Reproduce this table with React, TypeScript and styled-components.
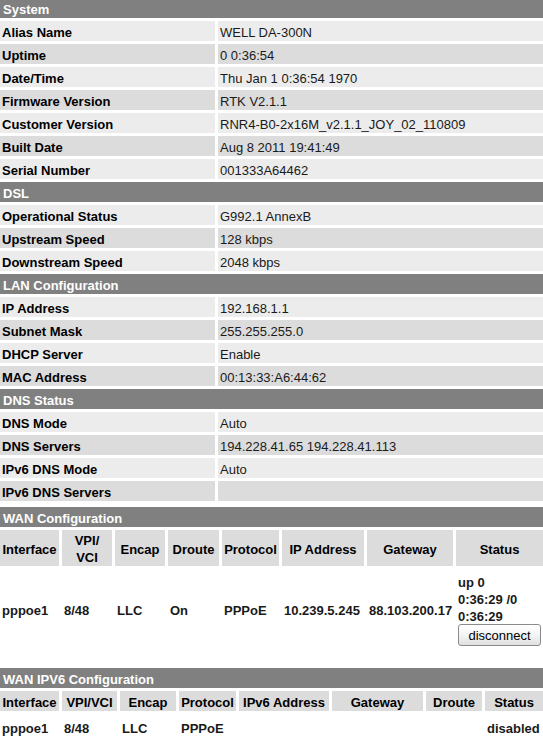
import React, { FunctionComponent } from 'react';
import styled, { createGlobalStyle } from 'styled-components';

const GlobalStyle = createGlobalStyle`
  html, body {
    margin: 0;
    padding: 0;
    background: #ffffff;
    overflow: hidden;
  }
  body {
    font-family: 'Liberation Sans', Arial, sans-serif;
    font-size: 13px;
    color: #000000;
  }
`;

const Page = styled.div`
  width: 543px;
  margin-top: -2px;
  display: flex;
  flex-direction: column;
`;

const InfoGrid = styled.div`
  display: grid;
  grid-template-columns: 215px 1fr;
  gap: 3px;
`;

const SectionHeader = styled.div`
  grid-column: 1 / -1;
  height: 20px;
  line-height: 23px;
  padding-left: 3px;
  background: #808080;
  color: #ffffff;
  font-weight: bold;
  white-space: nowrap;
`;

const Cell = styled.div<{ $shade: boolean }>`
  height: 20px;
  line-height: 24px;
  padding-left: 2px;
  background: ${(p) => (p.$shade ? '#dcdcdc' : '#ececec')};
  white-space: nowrap;
`;

const Label = styled(Cell)`
  font-weight: bold;
  color: #000000;
`;

const Value = styled(Cell)`
  color: #1a1a1a;
`;

const WanGrid = styled.div<{ $cols: string; $top: number }>`
  display: grid;
  grid-template-columns: ${(p) => p.$cols};
  gap: 3px;
  margin-top: ${(p) => p.$top}px;
  font-weight: bold;
`;

const ColHead = styled.div`
  background: #dcdcdc;
  display: flex;
  align-items: center;
  justify-content: center;
  text-align: center;
  line-height: 17px;
  padding: 2px 0 0;
  min-height: 18px;
  white-space: nowrap;
`;

const DataCell = styled.div<{ $top: number; $bottom: number }>`
  display: flex;
  flex-direction: column;
  justify-content: center;
  padding: ${(p) => p.$top}px 0 ${(p) => p.$bottom}px 2px;
  line-height: 17px;
  white-space: nowrap;
  color: #1a1a1a;
`;

const DisconnectButton = styled.button`
  align-self: flex-start;
  width: 83px;
  height: 22px;
  margin-top: -1px;
  padding: 0;
  font-family: 'Liberation Sans', Arial, sans-serif;
  font-size: 13px;
  color: #000000;
  border: 1px solid #8a8a8a;
  border-radius: 3px;
  background: linear-gradient(#ffffff 0%, #f4f4f4 50%, #e0e0e0 100%);
`;

interface Row {
  label: string;
  value: string;
}

interface Section {
  title: string;
  rows: Row[];
}

const sections: Section[] = [
  {
    title: 'System',
    rows: [
      { label: 'Alias Name', value: 'WELL DA-300N' },
      { label: 'Uptime', value: '0 0:36:54' },
      { label: 'Date/Time', value: 'Thu Jan 1 0:36:54 1970' },
      { label: 'Firmware Version', value: 'RTK V2.1.1' },
      { label: 'Customer Version', value: 'RNR4-B0-2x16M_v2.1.1_JOY_02_110809' },
      { label: 'Built Date', value: 'Aug 8 2011 19:41:49' },
      { label: 'Serial Number', value: '001333A64462' },
    ],
  },
  {
    title: 'DSL',
    rows: [
      { label: 'Operational Status', value: 'G992.1 AnnexB' },
      { label: 'Upstream Speed', value: '128 kbps' },
      { label: 'Downstream Speed', value: '2048 kbps' },
    ],
  },
  {
    title: 'LAN Configuration',
    rows: [
      { label: 'IP Address', value: '192.168.1.1' },
      { label: 'Subnet Mask', value: '255.255.255.0' },
      { label: 'DHCP Server', value: 'Enable' },
      { label: 'MAC Address', value: '00:13:33:A6:44:62' },
    ],
  },
  {
    title: 'DNS Status',
    rows: [
      { label: 'DNS Mode', value: 'Auto' },
      { label: 'DNS Servers', value: '194.228.41.65 194.228.41.113' },
      { label: 'IPv6 DNS Mode', value: 'Auto' },
      { label: 'IPv6 DNS Servers', value: '' },
    ],
  },
];

const wanHeads: string[][] = [
  ['Interface'],
  ['VPI/', 'VCI'],
  ['Encap'],
  ['Droute'],
  ['Protocol'],
  ['IP Address'],
  ['Gateway'],
  ['Status'],
];
const wanData = ['pppoe1', '8/48', 'LLC', 'On', 'PPPoE', '10.239.5.245', '88.103.200.17'];

const v6Heads = ['Interface', 'VPI/VCI', 'Encap', 'Protocol', 'IPv6 Address', 'Gateway', 'Droute', 'Status'];
const v6Data = ['pppoe1', '8/48', 'LLC', 'PPPoE', '', '', '', 'disabled'];

const App: FunctionComponent = () => {
  return (
    <>
      <GlobalStyle />
      <Page>
        <InfoGrid>
          {sections.map((section) => (
            <React.Fragment key={section.title}>
              <SectionHeader>{section.title}</SectionHeader>
              {section.rows.map((row, i) => (
                <React.Fragment key={row.label}>
                  <Label $shade={i % 2 === 1}>{row.label}</Label>
                  <Value $shade={i % 2 === 1}>{row.value}</Value>
                </React.Fragment>
              ))}
            </React.Fragment>
          ))}
        </InfoGrid>

        <WanGrid $cols="59px 50px 50px 51px 57px 82px 86px 1fr" $top={6}>
          <SectionHeader>WAN Configuration</SectionHeader>
          {wanHeads.map((lines) => (
            <ColHead key={lines.join('')}>
              {lines.map((l, i) => (
                <React.Fragment key={l}>
                  {i > 0 && <br />}
                  {l}
                </React.Fragment>
              ))}
            </ColHead>
          ))}
          {wanData.map((d, i) => (
            <DataCell key={i} $top={5} $bottom={2}>
              {d}
            </DataCell>
          ))}
          <DataCell $top={5} $bottom={2}>
            <span>up 0</span>
            <span>0:36:29 /0</span>
            <span>0:36:29</span>
            <DisconnectButton>disconnect</DisconnectButton>
          </DataCell>
        </WanGrid>

        <WanGrid $cols="59px 55px 56px 57px 90px 91px 56px 1fr" $top={20}>
          <SectionHeader>WAN IPV6 Configuration</SectionHeader>
          {v6Heads.map((h) => (
            <ColHead key={h}>{h}</ColHead>
          ))}
          {v6Data.map((d, i) => (
            <DataCell key={i} $top={6} $bottom={4}>
              {d}
            </DataCell>
          ))}
        </WanGrid>
      </Page>
    </>
  );
};

export default App;
